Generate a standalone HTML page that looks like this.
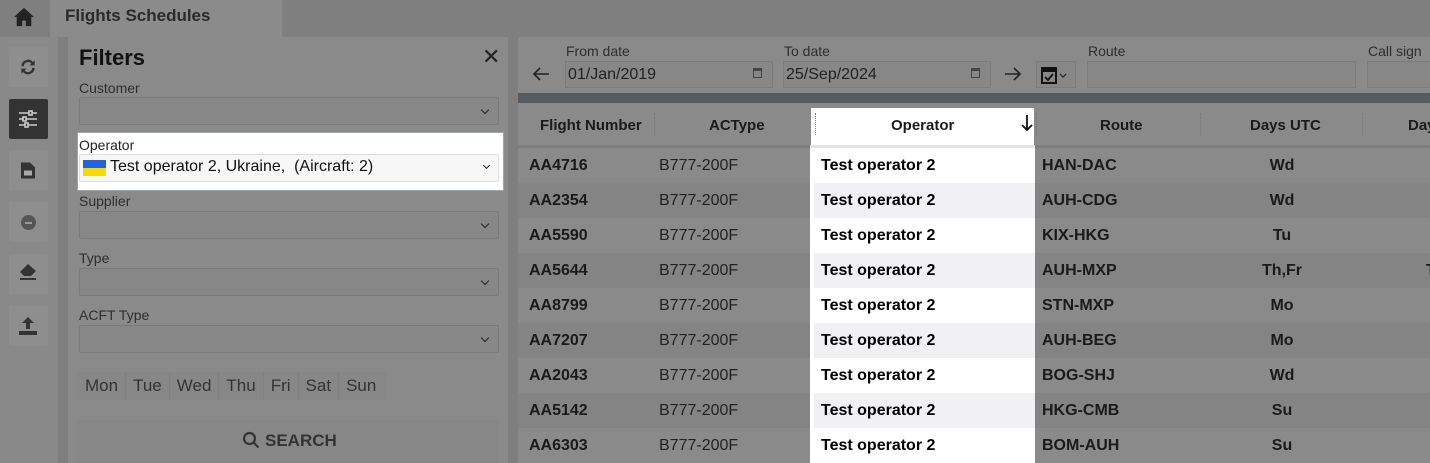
<!DOCTYPE html>
<html><head><style>
*{box-sizing:border-box;margin:0;padding:0}
body{width:1430px;height:463px;overflow:hidden;background:#8a8a8a;font-family:"Liberation Sans",Arial,sans-serif;position:relative;color:#1a1a1a}
.a{position:absolute}
.lbl{font-size:14px;color:#2e2e2e}
.sel{position:absolute;left:79px;width:420px;height:28px;border:1px solid #7a7a7a;background:#878787;border-radius:2px}
.sel:after{content:"";position:absolute;right:10px;top:9px;width:5px;height:5px;border-right:1.3px solid #222;border-bottom:1.3px solid #222;transform:rotate(45deg)}
.sb{position:absolute;left:9px;width:39px;height:40px;background:#8e8e8e;border-radius:2px}
.row{position:absolute;left:518px;width:912px;height:35px;font-size:16px;font-weight:bold}
.row div{position:absolute;top:9px}
.hd{position:absolute;top:117px;font-size:15px;font-weight:bold;color:#1a1a1a}
.dots{position:absolute;top:113px;height:22px;border-left:1px dotted #777}
</style></head><body>
<div class="a" style="left:0;top:0;width:1430px;height:37px;background:#7f7f7f"></div>
<div class="a" style="left:50px;top:0;width:232px;height:37px;background:#8b8b8b"></div>
<div class="a" style="left:65px;top:6px;font-size:17px;font-weight:bold;color:#2a2a2a">Flights Schedules</div>
<svg class="a" style="left:13px;top:7px" width="22" height="20" viewBox="0 0 24 22"><path d="M12 1L1 11h3v10h6v-6h4v6h6V11h3z" fill="#222"/></svg>
<div class="a" style="left:0;top:37px;width:58px;height:426px;background:#898989"></div>
<div class="a" style="left:58px;top:37px;width:10px;height:426px;background:#7f7f7f"></div>
<div class="a" style="left:508px;top:37px;width:10px;height:426px;background:#7f7f7f"></div>
<div class="sb" style="top:47px"></div>
<svg class="a" style="left:18px;top:57px" width="20" height="20" viewBox="0 0 24 24"><path d="M4 11a8 8 0 0 1 14-5l2-2v6h-6l2-2a5 5 0 0 0-9 3zM20 13a8 8 0 0 1-14 5l-2 2v-6h6l-2 2a5 5 0 0 0 9-3z" fill="#333"/></svg>
<div class="sb" style="top:99px;background:#333"></div>
<svg class="a" style="left:18px;top:110px" width="20" height="18" viewBox="0 0 20 18" stroke="#ccc" stroke-width="1.6" fill="none"><path d="M1 3h18M1 9h18M1 15h18"/><rect x="11" y="1" width="3" height="4" fill="#333"/><rect x="5" y="7" width="3" height="4" fill="#333"/><rect x="7" y="13" width="3" height="4" fill="#333"/></svg>
<div class="sb" style="top:150px"></div>
<svg class="a" style="left:21px;top:162px" width="14" height="17" viewBox="0 0 14 16"><path d="M0 0h9l5 5v11H0z" fill="#333"/><rect x="3" y="8" width="8" height="5" fill="#aaa"/></svg>
<div class="sb" style="top:202px"></div>
<div class="a" style="left:21px;top:215px;width:15px;height:15px;border-radius:50%;background:#555"><div style="position:absolute;left:4px;top:6.5px;width:7px;height:2px;background:#999"></div></div>
<div class="sb" style="top:254px"></div>
<svg class="a" style="left:18px;top:263px" width="20" height="18" viewBox="0 0 20 18"><path d="M10 1l8 7-5 5H6L2 9z" fill="#333"/><rect x="2" y="15" width="16" height="2" fill="#333"/></svg>
<div class="sb" style="top:306px"></div>
<svg class="a" style="left:18px;top:316px" width="20" height="20" viewBox="0 0 20 20"><path d="M10 1l6 6h-4v6H8V7H4z" fill="#333"/><rect x="1" y="15" width="18" height="4" fill="#333"/></svg>

<div class="a" style="left:79px;top:45px;font-size:22px;font-weight:bold;color:#111">Filters</div>
<div class="a" style="left:482px;top:44px;font-size:22px;color:#222">✕</div>
<div class="a lbl" style="left:79px;top:80px">Customer</div>
<div class="sel" style="top:97px"></div>
<div class="a" style="left:77px;top:132px;width:427px;height:59px;background:#fff;border:1px solid #9aa"></div>
<div class="a lbl" style="left:79px;top:137px;color:#222">Operator</div>
<div class="a" style="left:79px;top:154px;width:420px;height:28px;background:#f7f7f7;border:1px solid #ddd;border-radius:2px"></div>
<div class="a" style="left:83px;top:160px;width:23px;height:8px;background:#2563d6"></div>
<div class="a" style="left:83px;top:168px;width:23px;height:8px;background:#f5d90a"></div>
<div class="a" style="left:110px;top:158px;font-size:16px;color:#111">Test operator 2, Ukraine,&nbsp; (Aircraft: 2)</div>
<div class="a" style="left:484px;top:163px;width:5px;height:5px;border-right:1.3px solid #222;border-bottom:1.3px solid #222;transform:rotate(45deg)"></div>
<div class="a lbl" style="left:79px;top:193px">Supplier</div>
<div class="sel" style="top:211px"></div>
<div class="a lbl" style="left:79px;top:250px">Type</div>
<div class="sel" style="top:268px"></div>
<div class="a lbl" style="left:79px;top:307px">ACFT Type</div>
<div class="sel" style="top:325px"></div>
<div class="a" style="left:78px;top:372px;width:309px;height:28px;background:#878787;font-size:17px;color:#333;display:flex">
<span style="padding:4px 7px;border-right:1px solid #808080">Mon</span><span style="padding:4px 7px;border-right:1px solid #808080">Tue</span><span style="padding:4px 7px;border-right:1px solid #808080">Wed</span><span style="padding:4px 7px;border-right:1px solid #808080">Thu</span><span style="padding:4px 7px;border-right:1px solid #808080">Fri</span><span style="padding:4px 7px;border-right:1px solid #808080">Sat</span><span style="padding:4px 7px">Sun</span></div>
<div class="a" style="left:78px;top:420px;width:421px;height:43px;background:#878787"></div>
<svg class="a" style="left:242px;top:431px" width="18" height="18" viewBox="0 0 18 18" fill="none" stroke="#333" stroke-width="2.2"><circle cx="7.5" cy="7.5" r="5.5"/><path d="M11.5 11.5l5 5"/></svg>
<div class="a" style="left:265px;top:431px;font-size:17px;font-weight:bold;color:#333">SEARCH</div>

<div class="a lbl" style="left:566px;top:43px">From date</div>
<div class="a lbl" style="left:784px;top:43px">To date</div>
<div class="a lbl" style="left:1088px;top:43px">Route</div>
<div class="a lbl" style="left:1368px;top:43px">Call sign</div>
<svg class="a" style="left:532px;top:67px" width="18" height="14" viewBox="0 0 18 14" fill="none" stroke="#222" stroke-width="1.6"><path d="M17 7H2M8 1L2 7l6 6"/></svg>
<svg class="a" style="left:1004px;top:67px" width="18" height="14" viewBox="0 0 18 14" fill="none" stroke="#222" stroke-width="1.6"><path d="M1 7h15M10 1l6 6-6 6"/></svg>
<div class="a" style="left:565px;top:61px;width:208px;height:27px;background:#878787;border:1px solid #7c7c7c;font-size:16px;padding:4px 2px;color:#222">01/Jan/2019<span style="position:absolute;right:10px;top:6px;width:9px;height:10px;border:1.5px solid #444;border-top-width:3px"></span></div>
<div class="a" style="left:783px;top:61px;width:208px;height:27px;background:#878787;border:1px solid #7c7c7c;font-size:16px;padding:4px 2px;color:#222">25/Sep/2024<span style="position:absolute;right:10px;top:6px;width:9px;height:10px;border:1.5px solid #444;border-top-width:3px"></span></div>
<div class="a" style="left:1036px;top:61px;width:40px;height:27px;background:#878787;border:1px solid #7c7c7c"></div>
<svg class="a" style="left:1040px;top:65px" width="30" height="20" viewBox="0 0 30 20"><rect x="2" y="3" width="14" height="15" fill="none" stroke="#111" stroke-width="2"/><rect x="2" y="3" width="14" height="4" fill="#111"/><path d="M5 12l3 3 5-6" fill="none" stroke="#111" stroke-width="1.8"/><path d="M20 9l3 3 3-3" fill="none" stroke="#222" stroke-width="1.2"/></svg>
<div class="a" style="left:1087px;top:61px;width:269px;height:27px;background:#878787;border:1px solid #7c7c7c"></div>
<div class="a" style="left:1367px;top:61px;width:70px;height:27px;background:#878787;border:1px solid #7c7c7c"></div>
<div class="a" style="left:518px;top:93px;width:912px;height:10px;background:#555b5f"></div>
<div class="a" style="left:518px;top:103px;width:912px;height:42px;background:#8a8a8a"></div>
<div class="a" style="left:518px;top:145px;width:912px;height:4px;background:#7e7e7e"></div>
<div class="a" style="left:810px;top:108px;width:225px;height:355px;background:#fff;border-left:1px solid #888;border-right:1px solid #888"></div>
<div class="a" style="left:810px;top:145px;width:225px;height:4px;background:#e4e4e4"></div>
<div class="hd" style="left:540px">Flight Number</div>
<div class="hd" style="left:709px">ACType</div>
<div class="hd" style="left:891px">Operator</div>
<svg class="a" style="left:1021px;top:114px" width="12" height="18" viewBox="0 0 12 18" fill="none" stroke="#111" stroke-width="1.8"><path d="M6 1v15M1 11l5 5 5-5"/></svg>
<div class="hd" style="left:1100px">Route</div>
<div class="hd" style="left:1250px">Days UTC</div>
<div class="hd" style="left:1408px">Day</div>
<div class="dots" style="left:654px"></div><div class="dots" style="left:815px"></div><div class="dots" style="left:1036px"></div><div class="dots" style="left:1200px"></div><div class="dots" style="left:1362px"></div>

<div id="rows"></div>
<script>
var d=[["AA4716","HAN-DAC","Wd",""],["AA2354","AUH-CDG","Wd",""],["AA5590","KIX-HKG","Tu",""],["AA5644","AUH-MXP","Th,Fr","T"],["AA8799","STN-MXP","Mo",""],["AA7207","AUH-BEG","Mo",""],["AA2043","BOG-SHJ","Wd",""],["AA5142","HKG-CMB","Su",""],["AA6303","BOM-AUH","Su",""]];
var h="";
d.forEach(function(r,i){var y=148+i*35;var bg=i%2?"#848484":"#8a8a8a";var ob=i%2?"#f1f1f4":"#fff";
h+='<div class="row" style="top:'+y+'px;background:'+bg+'"><div style="left:11px">'+r[0]+'</div><div style="left:141px;font-weight:normal;color:#222">B777-200F</div>'
+'<div style="left:292px;top:0;width:225px;height:35px;background:'+ob+';border-left:4px solid #fff"></div><div style="left:303px;color:#000">Test operator 2</div>'
+'<div style="left:524px">'+r[1]+'</div><div style="left:682px;width:164px;text-align:center">'+r[2]+'</div><div style="left:908px">'+r[3]+'</div></div>';});
document.getElementById("rows").innerHTML=h;
</script>
</body></html>
